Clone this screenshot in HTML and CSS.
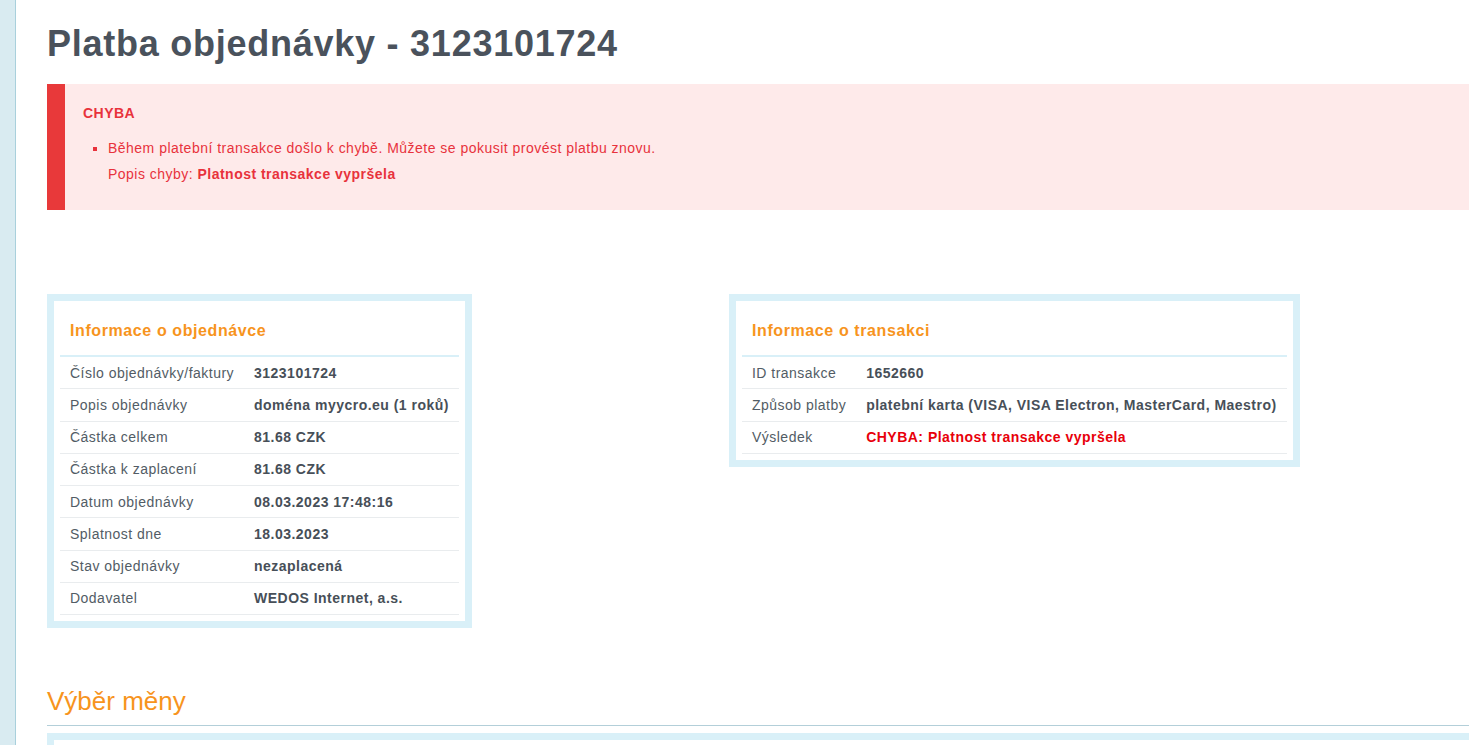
FILE: index.html
```html
<!DOCTYPE html>
<html lang="cs">
<head>
<meta charset="utf-8">
<title>Platba objednávky - 3123101724</title>
<link rel="stylesheet" href="styles.css">
</head>
<body>
<div class="layout">
  <aside class="sidebar"></aside>
  <main class="main">
    <h1 class="page-title">Platba objednávky - 3123101724</h1>

    <div class="alert">
      <div class="alert-title">CHYBA</div>
      <ul class="alert-list">
        <li class="alert-item">
          <span class="alert-bullet"></span>
          <div class="alert-text">
            <div>Během platební transakce došlo k chybě. Můžete se pokusit provést platbu znovu.</div>
            <div>Popis chyby: <strong>Platnost transakce vypršela</strong></div>
          </div>
        </li>
      </ul>
    </div>

    <div class="info-grid">
      <section class="info-box">
        <h2 class="info-heading">Informace o objednávce</h2>
        <table class="info-table">
          <tr><td class="lbl">Číslo objednávky/faktury</td><td class="val">3123101724</td></tr>
          <tr><td class="lbl">Popis objednávky</td><td class="val">doména myycro.eu (1 roků)</td></tr>
          <tr><td class="lbl">Částka celkem</td><td class="val">81.68 CZK</td></tr>
          <tr><td class="lbl">Částka k zaplacení</td><td class="val">81.68 CZK</td></tr>
          <tr><td class="lbl">Datum objednávky</td><td class="val">08.03.2023 17:48:16</td></tr>
          <tr><td class="lbl">Splatnost dne</td><td class="val">18.03.2023</td></tr>
          <tr><td class="lbl">Stav objednávky</td><td class="val">nezaplacená</td></tr>
          <tr><td class="lbl">Dodavatel</td><td class="val">WEDOS Internet, a.s.</td></tr>
        </table>
      </section>

      <section class="info-box">
        <h2 class="info-heading">Informace o transakci</h2>
        <table class="info-table">
          <tr><td class="lbl">ID transakce</td><td class="val">1652660</td></tr>
          <tr><td class="lbl">Způsob platby</td><td class="val">platební karta (VISA, VISA Electron, MasterCard, Maestro)</td></tr>
          <tr><td class="lbl">Výsledek</td><td class="val val-error">CHYBA: Platnost transakce vypršela</td></tr>
        </table>
      </section>
    </div>

    <h2 class="section-title">Výběr měny</h2>
    <div class="currency-box"></div>
  </main>
</div>
</body>
</html>
```

FILE: styles.css
```css
html, body {
  margin: 0;
  padding: 0;
  background: #fff;
}

body {
  font-family: "Liberation Sans", Arial, sans-serif;
  font-size: 14px;
  letter-spacing: 0.48px;
  color: #4b535d;
}

.layout {
  display: flex;
  min-height: 745px;
}

.sidebar {
  flex: 0 0 15px;
  background: #d9ebf1;
  border-right: 1px solid #a9d0dc;
}

.main {
  flex: 1;
  min-width: 0;
  padding-left: 31px;
  overflow: hidden;
}

.page-title {
  margin: 24px 0 20px;
  font-size: 36px;
  line-height: 40px;
  font-weight: bold;
  letter-spacing: 0.75px;
  color: #4a525c;
}

.alert {
  background: #feeaea;
  border-left: 18px solid #e8393a;
  padding: 19px 18px 23px;
  color: #e8323c;
}

.alert-title {
  font-weight: bold;
  font-size: 14px;
  line-height: 20px;
}

.alert-list {
  list-style: none;
  margin: 12px 0 0;
  padding: 0 0 0 10px;
}

.alert-item {
  display: flex;
  gap: 11px;
  line-height: 26px;
}

.alert-bullet {
  flex: 0 0 4px;
  height: 4px;
  margin-top: 12px;
  background: #e8323c;
}

.info-grid {
  display: grid;
  grid-template-columns: 682px 682px;
  align-items: start;
  justify-items: start;
  margin-top: 84px;
}

.info-box {
  border: 7px solid #d9f0f8;
  padding: 0 6px 6px;
  background: #fff;
}

.info-heading {
  margin: 0;
  padding: 20px 10px 14px;
  font-size: 16px;
  line-height: 20px;
  font-weight: bold;
  letter-spacing: 0.6px;
  color: #f7941d;
  border-bottom: 2px solid #d9f0f8;
}

.info-table {
  border-collapse: collapse;
}

.info-table td {
  padding: 6.5px 10px 5.5px;
  line-height: 19.25px;
  border-bottom: 1px solid #e9ecee;
  white-space: nowrap;
  vertical-align: middle;
}

.lbl {
  color: #525c65;
}

.val {
  font-weight: bold;
  color: #474f58;
}

.val-error {
  color: #e8000a;
}

.section-title {
  margin: 58px 0 0;
  padding-bottom: 9px;
  font-size: 26px;
  line-height: 30px;
  font-weight: normal;
  letter-spacing: 0;
  color: #f7941d;
  border-bottom: 1px solid #b3cfd9;
}

.currency-box {
  margin-top: 7px;
  height: 60px;
  border: 7px solid #d9f0f8;
  border-right: none;
}
```
